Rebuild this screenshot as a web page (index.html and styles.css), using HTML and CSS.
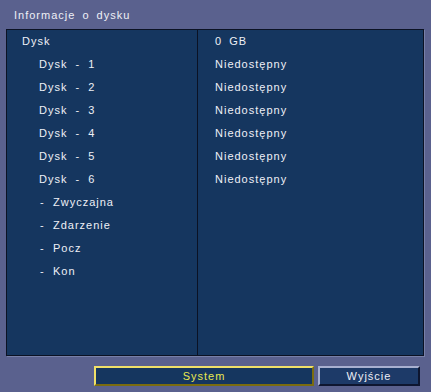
FILE: index.html
```html
<!DOCTYPE html>
<html lang="pl">
<head>
    <meta charset="UTF-8">
    <title>Informacje o dysku</title>
    <link rel="stylesheet" href="styles.css">
</head>
<body>
    <div class="screen">
        <div class="title">Informacje o dysku</div>

        <div class="panel">
            <div class="col col-names">
                <div class="row">Dysk</div>
                <div class="row lvl1">Dysk - 1</div>
                <div class="row lvl1">Dysk - 2</div>
                <div class="row lvl1">Dysk - 3</div>
                <div class="row lvl1">Dysk - 4</div>
                <div class="row lvl1">Dysk - 5</div>
                <div class="row lvl1">Dysk - 6</div>
                <div class="row lvl2"><span class="dash">-</span>Zwyczajna</div>
                <div class="row lvl2"><span class="dash">-</span>Zdarzenie</div>
                <div class="row lvl2"><span class="dash">-</span>Pocz</div>
                <div class="row lvl2"><span class="dash">-</span>Kon</div>
            </div>
            <div class="col col-values">
                <div class="row">0 GB</div>
                <div class="row">Niedostępny</div>
                <div class="row">Niedostępny</div>
                <div class="row">Niedostępny</div>
                <div class="row">Niedostępny</div>
                <div class="row">Niedostępny</div>
                <div class="row">Niedostępny</div>
            </div>
        </div>

        <div class="actions">
            <button class="btn btn-active">System</button>
            <button class="btn">Wyjście</button>
        </div>
    </div>
</body>
</html>
```

FILE: styles.css
```css
* {
    margin: 0;
    padding: 0;
    box-sizing: border-box;
}

body {
    background: #5a618e;
    font-family: "Liberation Sans", Arial, sans-serif;
    font-size: 11px;
    letter-spacing: 1px;
    word-spacing: 3px;
    color: #eef0f6;
}

.screen {
    width: 431px;
    height: 392px;
    padding: 0 7px 0 6px;
}

.title {
    height: 29px;
    padding: 8px 0 0 8px;
    line-height: 14px;
}

.panel {
    display: grid;
    grid-template-columns: 191px 1fr;
    width: 418px;
    height: 327px;
    background: #15365f;
    border: 1px solid #0b1224;
    box-shadow: 1px 1px 0 #7880a8;
}

.col-names {
    border-right: 1px solid #0b1224;
}

.row {
    height: 23px;
    line-height: 22px;
}

.col-names .row {
    padding-left: 15px;
}

.col-names .lvl1 {
    padding-left: 32px;
    word-spacing: 4px;
}

.col-names .lvl2 {
    padding-left: 33px;
}

.dash {
    display: inline-block;
    width: 13px;
}

.col-values .row {
    padding-left: 17px;
}

.actions {
    display: flex;
    gap: 4px;
    padding: 10px 0 0 88px;
}

.btn {
    height: 20px;
    font-family: inherit;
    font-size: 11px;
    letter-spacing: 1px;
    color: #eef0f6;
    background: #1d3a68;
    border: 2px solid;
    border-color: #a8b0d0 #0e1630 #0e1630 #a8b0d0;
    width: 102px;
}

.btn-active {
    width: 220px;
    background: #15365f;
    color: #e8e850;
    border-color: #f0e068 #7a6c10 #7a6c10 #f0e068;
}
```
